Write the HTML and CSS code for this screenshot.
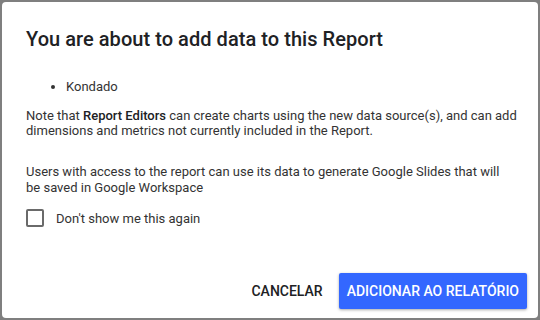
FILE: index.html
```html
<!DOCTYPE html>
<html>
<head>
<meta charset="utf-8">
<link rel="stylesheet" href="styles.css">
</head>
<body>
<div class="backdrop">
  <div class="dialog">
    <h1 class="title">You are about to add data to this Report</h1>
    <ul class="sources">
      <li>Kondado</li>
    </ul>
    <p class="note">Note that <b>Report Editors</b> can create charts using the new data source(s), and can add dimensions and metrics not currently included in the Report.</p>
    <p class="note slides">Users with access to the report can use its data to generate Google Slides that will be saved in Google Workspace</p>
    <label class="check">
      <span class="box"></span>
      <span class="check-label">Don't show me this again</span>
    </label>
    <div class="actions">
      <button class="btn btn-text">CANCELAR</button>
      <button class="btn btn-primary">ADICIONAR AO RELATÓRIO</button>
    </div>
  </div>
</div>
</body>
</html>
```

FILE: styles.css
```css
html, body {
  margin: 0;
  padding: 0;
  width: 540px;
  height: 320px;
  overflow: hidden;
}
body {
  background: #7f7f7f;
  font-family: Roboto, "Liberation Sans", Arial, sans-serif;
}
.backdrop {
  padding: 2px;
  box-sizing: border-box;
  width: 540px;
  height: 320px;
}
.dialog {
  background: #fff;
  border-radius: 4px;
  height: 316px;
  box-sizing: border-box;
  padding: 25px 18px 0 24px;
  display: flex;
  flex-direction: column;
  color: #333;
}
.title {
  margin: 0;
  font-size: 20px;
  font-weight: 500;
  line-height: 24px;
  color: #202124;
  letter-spacing: 0.05px;
}
.sources {
  margin: 27px 0 0 0;
  padding-left: 40px;
  font-size: 13px;
  line-height: 18px;
}
.note {
  margin: 12px 0 0 0;
  font-size: 13px;
  line-height: 15px;
}
.note b {
  font-weight: 500;
  color: #202124;
}
.slides {
  margin-top: 26px;
  max-width: 480px;
  line-height: 16px;
}
.check {
  margin-top: 13px;
  display: flex;
  align-items: center;
  gap: 12px;
  font-size: 13px;
}
.box {
  width: 18px;
  height: 18px;
  box-sizing: border-box;
  border: 2px solid #6a6a6a;
  border-radius: 2px;
}
.actions {
  margin-top: auto;
  margin-bottom: 9px;
  margin-right: -7px;
  display: flex;
  justify-content: flex-end;
  align-items: center;
  gap: 8px;
}
.btn {
  font-family: inherit;
  font-size: 14px;
  font-weight: 500;
  border: none;
  border-radius: 2px;
  height: 36px;
  padding: 0 8px;
  cursor: pointer;
}
.btn-text {
  background: transparent;
  color: #202124;
}
.btn-primary {
  background: #3367ff;
  color: #fff;
  box-shadow: 0 1px 3px rgba(0,0,0,0.35);
}
```
